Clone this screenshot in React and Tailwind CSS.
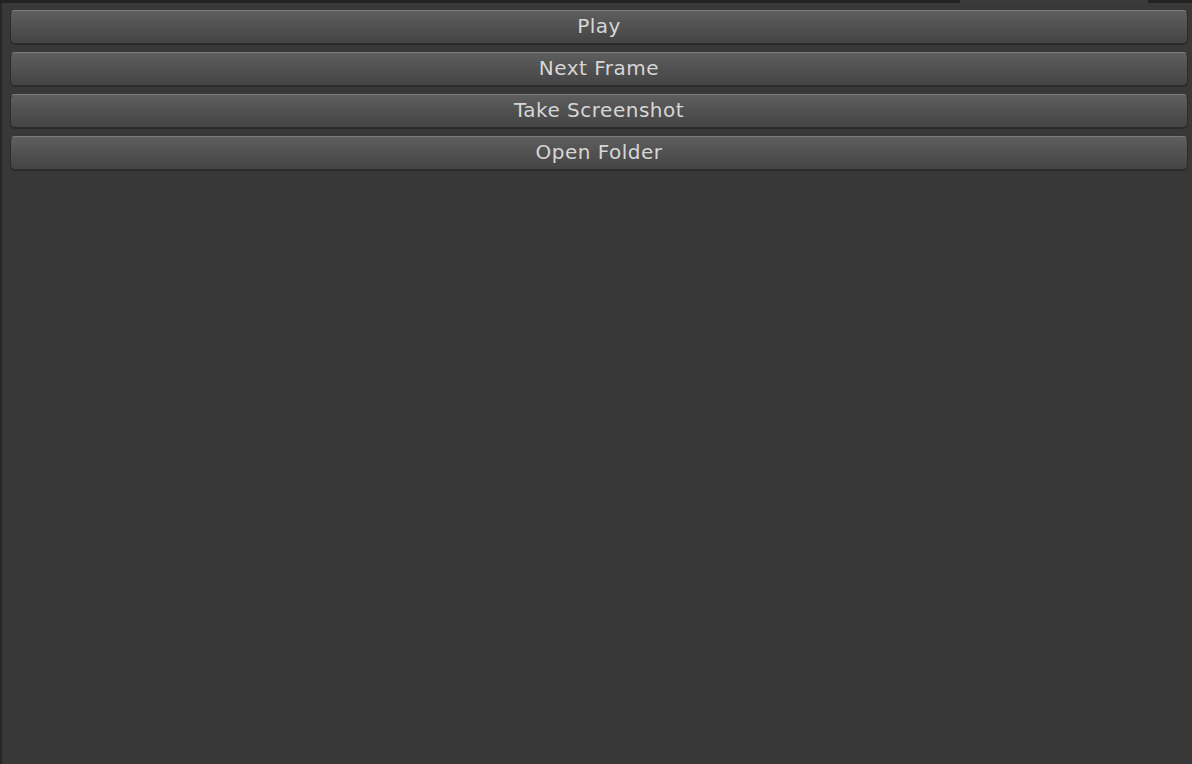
const buttons = ["Play", "Next Frame", "Take Screenshot", "Open Folder"];

function UnityButton({label}) {
    return (
        <button className="h-[34px] w-full rounded-[5px] border border-[#2c2c2c] border-t-[#7c7c7c] bg-gradient-to-b from-[#5e5e5e] to-[#444444] pb-[2px] text-[20px] leading-none tracking-[0.5px] text-[#d6d6d6] shadow-[0_1px_0_#2a2a2a]"
                style={{fontFamily: '"DejaVu Sans", sans-serif'}}>
            {label}
        </button>
    );
}

export default function App() {
    return (
        <div className="flex h-[764px] w-[1192px] flex-col overflow-hidden bg-[#383838]">
            <div className="flex h-[3px] shrink-0 bg-[#222222]">
                <div className="w-[960px]"/>
                <div className="w-[188px] bg-[#3a3a3a]"/>
            </div>
            <div className="flex flex-1">
                <div className="w-[2px] bg-[#262626]"/>
                <div className="flex flex-1 flex-col gap-[8px] pl-[8px] pr-[4px] pt-[7px]">
                    {buttons.map((b) => (
                        <UnityButton key={b} label={b}/>
                    ))}
                </div>
            </div>
        </div>
    );
}
